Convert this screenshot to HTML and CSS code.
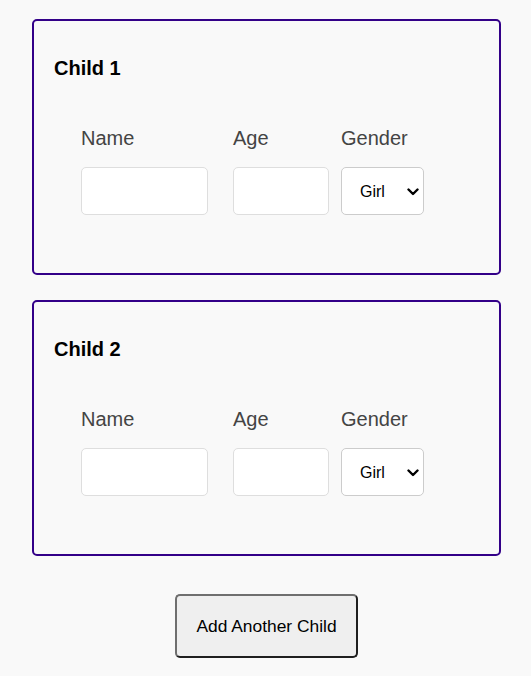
FILE: index.html
```html
<!DOCTYPE html>
<html>
<head>
<meta charset="utf-8">
<link rel="stylesheet" href="styles.css">
</head>
<body>
<div class="page">
  <div class="card">
    <h3 class="title">Child 1</h3>
    <div class="row">
      <div class="field f-name"><label class="label">Name</label><input class="input in-name" type="text"></div>
      <div class="field f-age"><label class="label">Age</label><input class="input in-age" type="text"></div>
      <div class="field f-gender"><label class="label">Gender</label>
        <span class="select-wrap"><select class="select"><option>Girl</option><option>Boy</option></select><svg class="chev" width="12" height="8" viewBox="0 0 12 8"><path d="M1.5 1.5 L6 6 L10.5 1.5" fill="none" stroke="#000" stroke-width="2.4" stroke-linecap="round" stroke-linejoin="round"/></svg></span>
      </div>
    </div>
  </div>
  <div class="card">
    <h3 class="title">Child 2</h3>
    <div class="row">
      <div class="field f-name"><label class="label">Name</label><input class="input in-name" type="text"></div>
      <div class="field f-age"><label class="label">Age</label><input class="input in-age" type="text"></div>
      <div class="field f-gender"><label class="label">Gender</label>
        <span class="select-wrap"><select class="select"><option>Girl</option><option>Boy</option></select><svg class="chev" width="12" height="8" viewBox="0 0 12 8"><path d="M1.5 1.5 L6 6 L10.5 1.5" fill="none" stroke="#000" stroke-width="2.4" stroke-linecap="round" stroke-linejoin="round"/></svg></span>
      </div>
    </div>
  </div>
  <div class="actions">
    <button class="add-btn" type="button">Add Another Child</button>
  </div>
</div>
</body>
</html>
```
FILE: styles.css
```css
html, body {
  margin: 0;
  padding: 0;
  background: #f9f9f9;
  font-family: "Liberation Sans", Arial, sans-serif;
}
.page {
  width: 469px;
  padding: 19px 0 0 32px;
}
.card {
  box-sizing: border-box;
  width: 469px;
  height: 256px;
  border: 2px solid #330088;
  border-radius: 5px;
  padding: 20px 20px;
  margin-bottom: 25px;
  background: #f9f9f9;
}
.title {
  margin: 16px 0 0;
  font-size: 20px;
  line-height: 23px;
  font-weight: bold;
  color: #000;
}
.row {
  display: flex;
  margin-top: 47px;
  padding-left: 27px;
}
.field {
  display: flex;
  flex-direction: column;
  align-items: flex-start;
}
.f-name { width: 152px; }
.f-age { width: 108px; }
.label {
  font-size: 20px;
  line-height: 23px;
  color: #444;
}
.input {
  box-sizing: border-box;
  margin: 17px 0 0;
  height: 48px;
  border: 1px solid #dedede;
  border-radius: 5px;
  background: #fff;
  padding: 0 8px;
  font-size: 16px;
  font-family: "Liberation Sans", Arial, sans-serif;
}
.in-name { width: 127px; }
.in-age { width: 96px; }
.select-wrap {
  position: relative;
  display: block;
  margin-top: 17px;
  width: 83px;
  height: 48px;
}
.select {
  box-sizing: border-box;
  -webkit-appearance: none;
  appearance: none;
  margin: 0;
  width: 83px;
  height: 48px;
  border: 1px solid #cccccc;
  border-radius: 5px;
  background-color: #fff;
  padding: 0 20px 0 18px;
  font-size: 16px;
  color: #000;
  font-family: "Liberation Sans", Arial, sans-serif;
}
.chev {
  position: absolute;
  left: 66px;
  top: 21px;
  pointer-events: none;
}
.actions {
  display: flex;
  justify-content: center;
  padding-top: 13px;
}
.add-btn {
  box-sizing: border-box;
  width: 183px;
  height: 64px;
  border: 2px solid;
  border-color: #6f6f6f #1f1f1f #1f1f1f #6f6f6f;
  border-radius: 5px;
  background: #efefef;
  font-family: "Liberation Sans", Arial, sans-serif;
  font-size: 17.4px;
  color: #000;
  padding: 0;
}
```
